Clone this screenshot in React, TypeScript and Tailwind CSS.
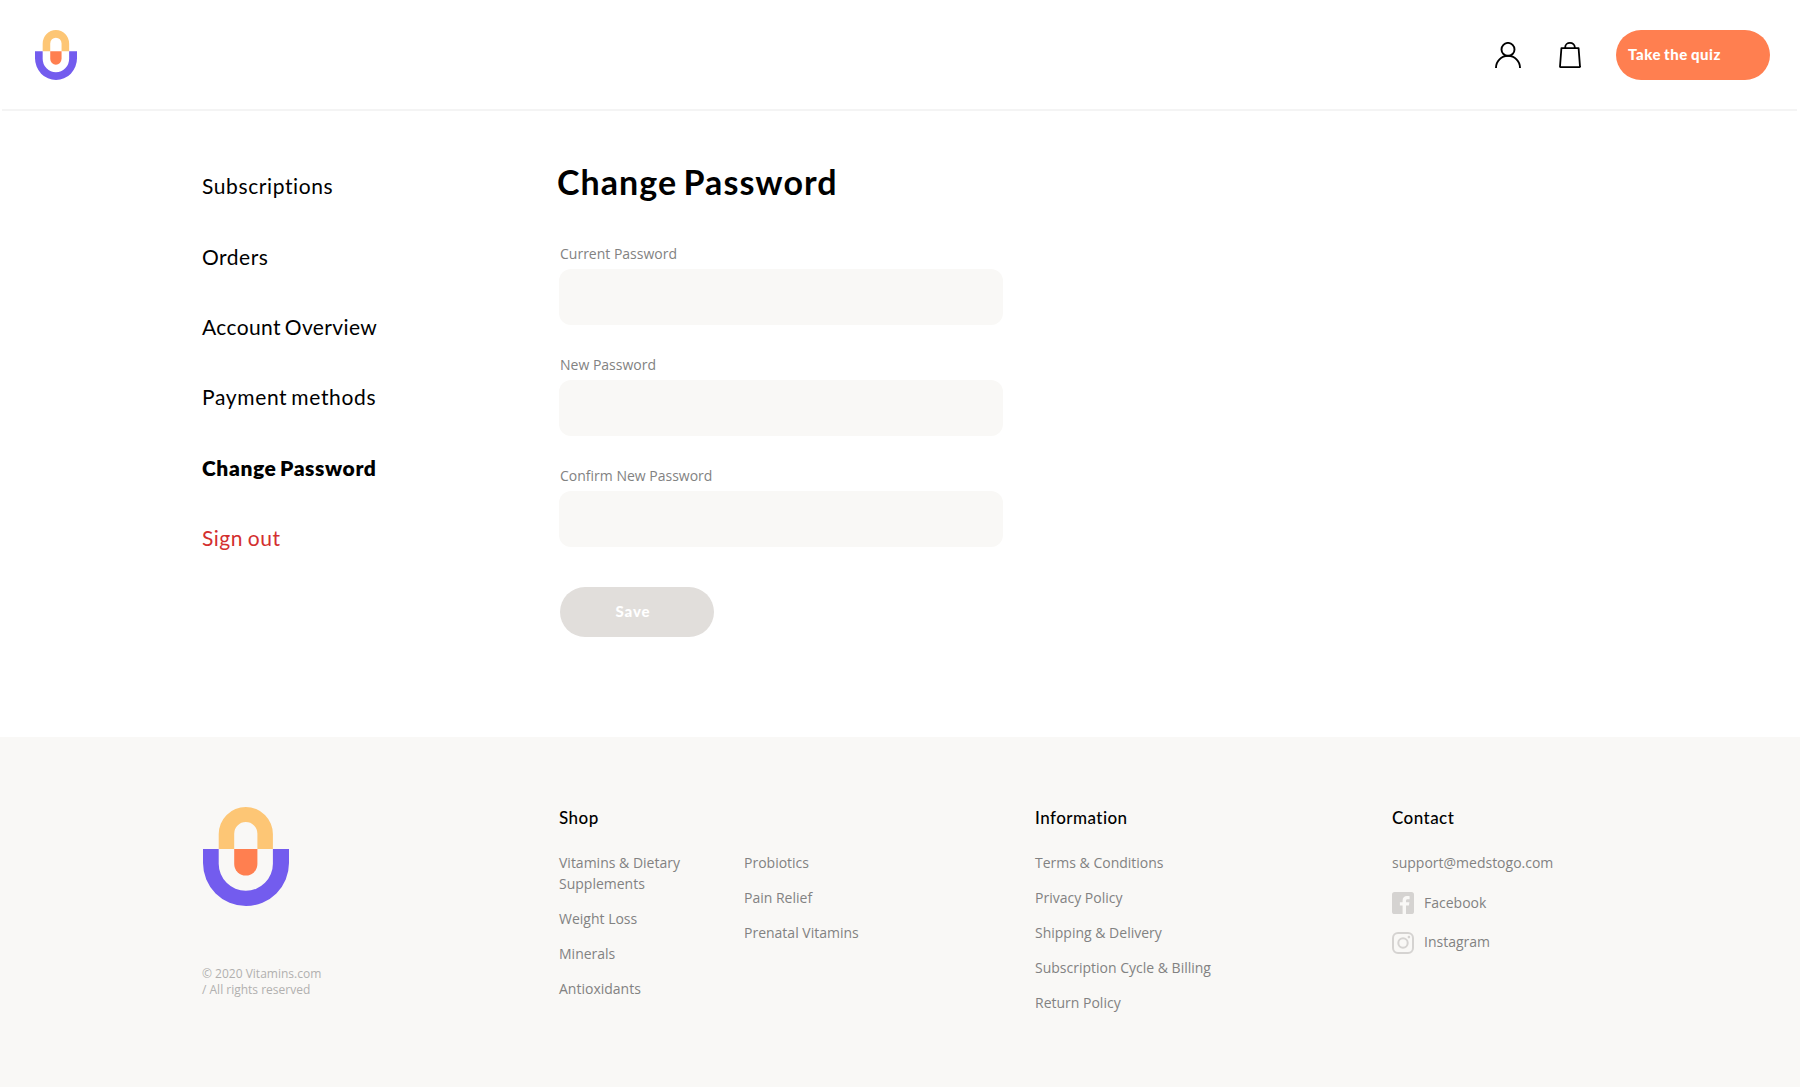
const navItems = [
  { label: "Subscriptions", style: "tracking-[0.6px] text-black" },
  { label: "Orders", style: "tracking-[0.5px] text-black" },
  { label: "Account Overview", style: "tracking-[0.38px] [word-spacing:-2px] text-black" },
  { label: "Payment methods", style: "tracking-[0.65px] [word-spacing:-2px] text-black" },
  { label: "Change Password", style: "tracking-[0.6px] [word-spacing:-2px] font-extrabold text-black" },
  { label: "Sign out", style: "tracking-[0.5px] [word-spacing:-1px] text-[#d32f2f]" },
];

const fields = ["Current Password", "New Password", "Confirm New Password"];
const shopPrimary = ["Vitamins & Dietary Supplements", "Weight Loss", "Minerals", "Antioxidants"];
const shopSecondary = ["Probiotics", "Pain Relief", "Prenatal Vitamins"];
const information = [
  "Terms & Conditions",
  "Privacy Policy",
  "Shipping & Delivery",
  "Subscription Cycle & Billing",
  "Return Policy",
];

function Logo({ className }: { className: string }) {
  return (
    <svg viewBox="0 0 86 99" preserveAspectRatio="none" className={className}>
      <path fill="#fdc675" d="M15.7 42V27.1a27.1 27.1 0 0 1 54.2 0V42H54.4V26.7a11.6 11.6 0 0 0-23.2 0V42Z" />
      <path fill="#ff7f50" d="M31.2 42h23.2v15a11.6 11.6 0 0 1-23.2 0Z" />
      <path fill="#735cee" d="M0 42h15.7v14.7a27.1 27.1 0 0 0 54.2 0V42H86v14a43 43 0 0 1-86 0Z" />
    </svg>
  );
}

function UserIcon() {
  return (
    <svg viewBox="0 0 26 26" className="h-[26px] w-[26px]" fill="none" stroke="#000" strokeWidth="1.9">
      <circle cx="13" cy="7.4" r="6.5" />
      <path d="M1 26v-.2a12 12 0 0 1 24 0v.2" />
    </svg>
  );
}

function BagIcon() {
  return (
    <svg viewBox="0 0 22 26" className="h-[26px] w-[22px]" fill="none" stroke="#000" strokeWidth="1.8" strokeLinejoin="round">
      <path d="M2.4 6.2h17.2l1.4 18.3a.5.5 0 0 1-.5.6H1.5a.5.5 0 0 1-.5-.6Z" />
      <path d="M6.2 6V5.2a4.8 4.3 0 0 1 9.6 0V6" />
    </svg>
  );
}

function FacebookIcon() {
  return (
    <svg viewBox="0 0 22 22" className="h-[22px] w-[22px]">
      <rect width="22" height="22" rx="2.6" fill="#d5d3d1" />
      <path
        fill="#f9f8f6"
        d="M10.6 22v-8.4H7.9v-3.4h2.7V8.5c0-3 1.7-4.5 4.4-4.5.9 0 1.8.1 2.6.2v3h-1.8c-1.4 0-1.8.7-1.8 1.7v1.3h3.4l-.5 3.4H14V22Z"
      />
    </svg>
  );
}

function InstagramIcon() {
  return (
    <svg viewBox="0 0 22 22" className="h-[22px] w-[22px]" fill="none" stroke="#d5d3d1" strokeWidth="2">
      <rect x="1" y="1" width="20" height="20" rx="5" />
      <circle cx="11" cy="11" r="4.7" />
      <circle cx="16.9" cy="5.1" r="1.3" fill="#d5d3d1" stroke="none" />
    </svg>
  );
}

function LinkList({ items }: { items: string[] }) {
  return (
    <ul className="flex flex-col gap-[14px]">
      {items.map((item) => (
        <li key={item}>{item}</li>
      ))}
    </ul>
  );
}

function FooterHeading({ children }: { children: string }) {
  return (
    <h2 className="mb-[22px] font-['Lato',sans-serif] text-[17px] leading-6 font-medium tracking-[0.45px] text-black">
      {children}
    </h2>
  );
}

export default function App() {
  return (
    <div className="flex h-[1087px] w-[1800px] flex-col bg-white font-['Open_Sans',sans-serif]">
      <header className="flex h-[109px] shrink-0 items-center pt-px pr-[30px] pl-[35px]">
        <Logo className="h-[50px] w-[42px]" />
        <div className="ml-auto flex items-center">
          <UserIcon />
          <div className="ml-[38px]">
            <BagIcon />
          </div>
          <button className="ml-[35px] h-[50px] w-[154px] rounded-full bg-[#ff7f50] pb-0.5 pl-3 text-left font-['Lato',sans-serif] text-[15px] leading-5 font-black tracking-[0.52px] [word-spacing:-1px] text-white">
            Take the quiz
          </button>
        </div>
      </header>
      <div className="mr-[3px] ml-[2px] h-[2px] shrink-0 bg-[#f4f4f4]" />

      <main className="flex h-[626px] shrink-0 pl-[202px]">
        <nav className="w-[356px] pt-[60.3px] font-['Lato',sans-serif] text-[21px]">
          <ul className="flex flex-col gap-[40.4px]">
            {navItems.map((item) => (
              <li key={item.label} className={`leading-[30px] ${item.style}`}>
                {item.label}
              </li>
            ))}
          </ul>
        </nav>
        <section className="pt-[51px]">
          <h1 className="-ml-px font-['Lato',sans-serif] text-[34px] leading-10 font-bold tracking-[1.05px] [word-spacing:-3px] text-black">
            Change Password
          </h1>
          <form className="mt-[41px] ml-px">
            {fields.map((field) => (
              <label key={field} className="mb-[29px] block text-sm leading-[21px] text-[#828282]">
                <span className="block pl-px">{field}</span>
                <input type="password" className="mt-[5px] block h-14 w-[444px] rounded-xl bg-[#f9f8f6]" />
              </label>
            ))}
            <button
              type="button"
              className="mt-[11px] ml-px h-[50px] w-[154px] rounded-full bg-[#e1dedb] pr-2 pb-0.5 font-['Lato',sans-serif] text-[15px] leading-5 font-black tracking-[0.9px] text-white"
            >
              Save
            </button>
          </form>
        </section>
      </main>

      <footer className="flex flex-1 bg-[#f9f8f6] pt-[69px] pl-[202px] text-sm leading-[21px] text-[#828282]">
        <div className="w-[357px]">
          <Logo className="mt-px ml-px h-[99px] w-[86px]" />
          <p className="mt-[60px] text-xs leading-4 text-[#b1b0af]">
            © 2020 Vitamins.com
            <br />/ All rights reserved
          </p>
        </div>
        <div className="w-[476px]">
          <FooterHeading>Shop</FooterHeading>
          <div className="flex">
            <div className="w-[185px] pr-[50px]">
              <LinkList items={shopPrimary} />
            </div>
            <LinkList items={shopSecondary} />
          </div>
        </div>
        <div className="w-[357px]">
          <FooterHeading>Information</FooterHeading>
          <LinkList items={information} />
        </div>
        <div>
          <FooterHeading>Contact</FooterHeading>
          <p>support@medstogo.com</p>
          <div className="mt-[19px] flex gap-[10px]">
            <FacebookIcon />
            <span>Facebook</span>
          </div>
          <div className="mt-[18px] flex gap-[10px]">
            <InstagramIcon />
            <span className="-mt-px">Instagram</span>
          </div>
        </div>
      </footer>
    </div>
  );
}
